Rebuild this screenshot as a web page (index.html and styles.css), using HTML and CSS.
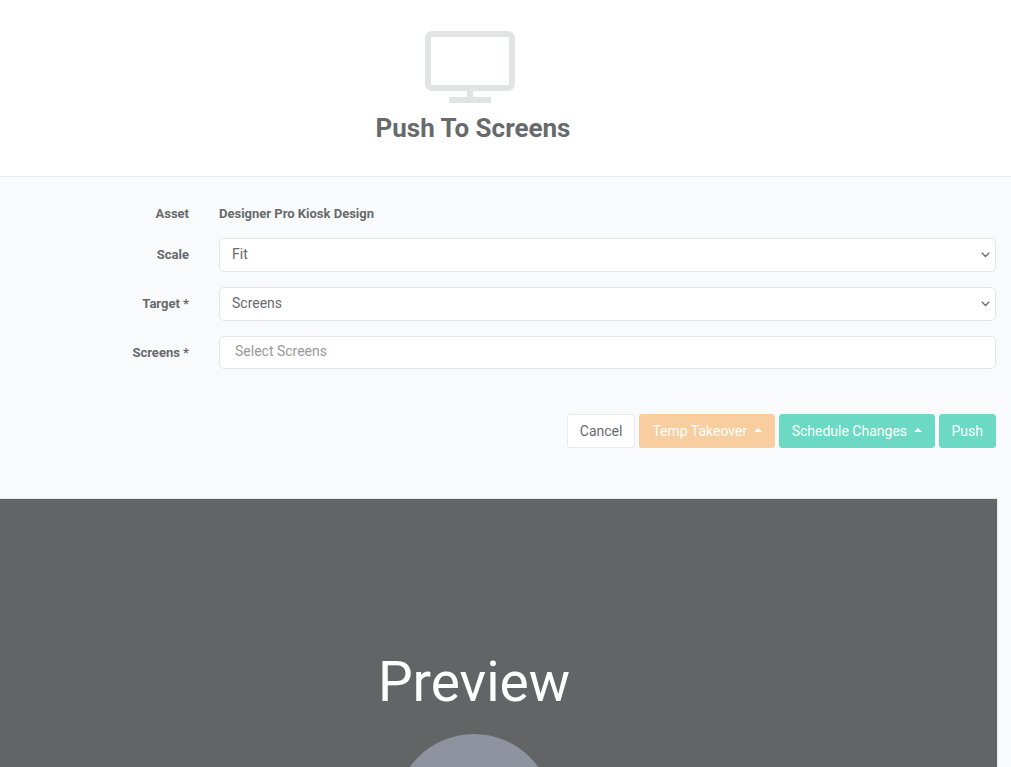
FILE: index.html
```html
<!DOCTYPE html>
<html lang="en">
<head>
<meta charset="utf-8">
<title>Push To Screens</title>
<link rel="stylesheet" href="styles.css">
</head>
<body>
<header class="header">
  <svg class="header-icon" width="90" height="72" viewBox="0 0 90 72" aria-hidden="true">
    <rect x="3" y="3" width="84" height="54" rx="4" fill="none" stroke="currentColor" stroke-width="6"/>
    <path d="M42 58h6v8h-6z" fill="currentColor"/>
    <rect x="24" y="66" width="42" height="6" rx="1" fill="currentColor"/>
  </svg>
  <h1 class="title">Push To Screens</h1>
</header>
<form class="form">
  <div class="row row-static">
    <span class="label">Asset</span>
    <strong class="value">Designer Pro Kiosk Design</strong>
  </div>
  <div class="row">
    <label class="label" for="scale">Scale</label>
    <div class="select-wrap">
      <select class="control" id="scale"><option>Fit</option></select>
      <svg class="chevron" width="9" height="6" viewBox="0 0 9 6" aria-hidden="true"><path d="M.8 .8 4.5 4.5 8.2 .8"/></svg>
    </div>
  </div>
  <div class="row">
    <label class="label" for="target">Target *</label>
    <div class="select-wrap">
      <select class="control" id="target"><option>Screens</option></select>
      <svg class="chevron" width="9" height="6" viewBox="0 0 9 6" aria-hidden="true"><path d="M.8 .8 4.5 4.5 8.2 .8"/></svg>
    </div>
  </div>
  <div class="row">
    <label class="label" for="screens">Screens *</label>
    <input class="control control-search" id="screens" type="text" placeholder="Select Screens">
  </div>
  <div class="actions">
    <button class="btn btn-plain" type="button">Cancel</button>
    <button class="btn btn-warning" type="button">Temp Takeover <span class="caret"></span></button>
    <button class="btn btn-primary" type="button">Schedule Changes <span class="caret"></span></button>
    <button class="btn btn-primary" type="button">Push</button>
  </div>
</form>
<section class="preview">
  <h2 class="preview-title">Preview</h2>
  <div class="spinner"></div>
</section>
</body>
</html>
```
FILE: styles.css
```css
* {
  box-sizing: border-box;
}

body {
  display: flex;
  flex-direction: column;
  height: 100vh;
  margin: 0;
  overflow: hidden;
  background: #f9fafc;
  color: #676a6c;
  font-family: Roboto, sans-serif;
  font-size: 14px;
  line-height: 20px;
}

.header {
  display: flex;
  flex-direction: column;
  align-items: center;
  padding: 31px 65px 33px 0;
  border-bottom: 1px solid #e9ebed;
  background: #fff;
}

.header-icon {
  margin-right: 6px;
  color: #e2e4e3;
}

.title {
  margin: 10px 0 0;
  font-size: 26px;
  font-weight: 700;
  line-height: 30px;
}

.form {
  display: flex;
  flex-direction: column;
  gap: 15px;
  padding: 27px 15px 50px 0;
}

.row {
  display: grid;
  grid-template-columns: 189px 1fr;
  column-gap: 30px;
  align-items: center;
}

.label,
.value {
  font-size: 13px;
  font-weight: 700;
}

.label {
  text-align: right;
}

.row-static {
  margin-bottom: -1px;
}

.select-wrap {
  position: relative;
  display: grid;
}

.control {
  width: 100%;
  height: 34px;
  padding: 0 12px 2px;
  border: 1px solid #e5e6e7;
  border-radius: 5px;
  background: #fff;
  color: inherit;
  font: inherit;
  appearance: none;
}

.control-search {
  height: 33px;
  padding: 0 15px 4px;
}

.control-search::placeholder {
  color: #999;
  opacity: 1;
}

.chevron {
  position: absolute;
  top: 14px;
  right: 6px;
  fill: none;
  stroke: #676a6c;
  stroke-width: 1.3;
  pointer-events: none;
}

.actions {
  display: flex;
  justify-content: flex-end;
  gap: 4px;
  margin-top: 30px;
}

.btn {
  height: 34px;
  padding: 0 12px;
  border: 1px solid transparent;
  border-radius: 3px;
  color: #fff;
  font: inherit;
}

.btn-plain {
  border-color: #e7eaec;
  background: #fff;
  color: #676a6c;
}

.btn-warning {
  border-color: #f8cd9f;
  background: #f8cd9f;
}

.btn-primary {
  border-color: #6bd9c3;
  background: #6bd9c3;
}

.caret {
  display: inline-block;
  margin-left: 3px;
  border-right: 4px solid transparent;
  border-bottom: 4px solid;
  border-left: 4px solid transparent;
  vertical-align: 4px;
}

.preview {
  display: flex;
  flex: 1;
  flex-direction: column;
  align-items: center;
  min-height: 0;
  margin-right: 13px;
  padding: 152px 49px 0 0;
  overflow: hidden;
  border-top: 1px solid #e7eaec;
  border-right: 1px solid #e7eaec;
  background: #636466;
  color: #fff;
}

.preview-title {
  margin: 0 0 20px;
  font-size: 55px;
  font-weight: 400;
  line-height: 63px;
}

.spinner {
  flex: none;
  width: 158px;
  height: 158px;
  border-radius: 50%;
  background: #8f929f;
}
```
